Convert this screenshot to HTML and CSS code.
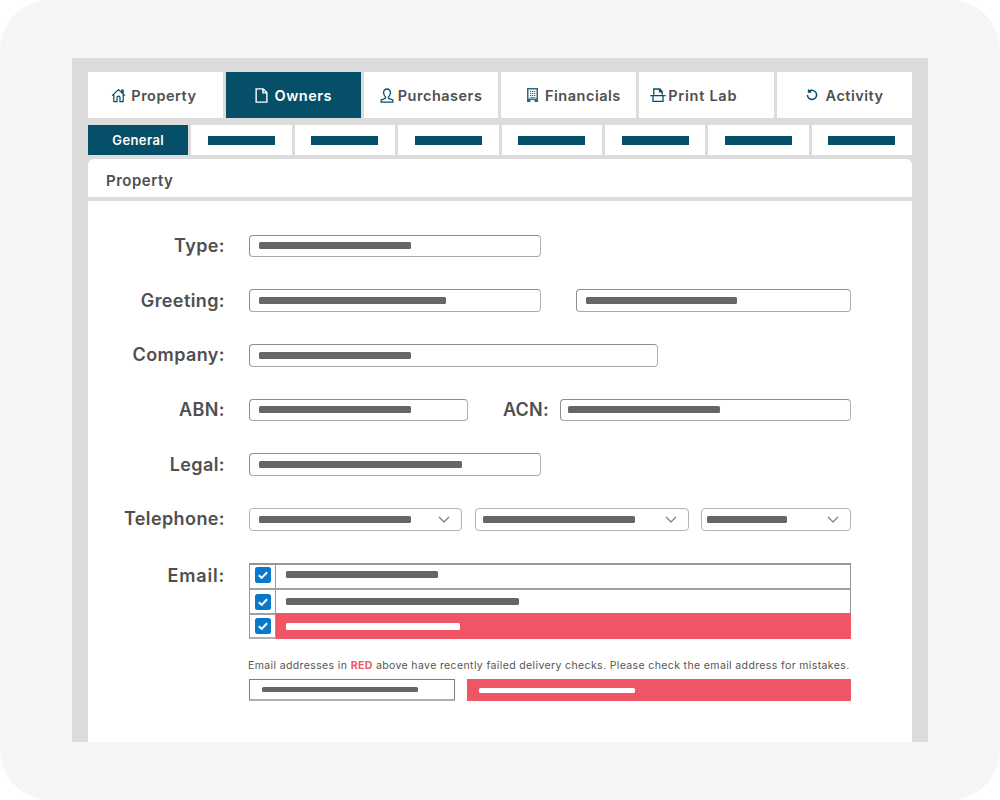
FILE: index.html
```html
<!DOCTYPE html>
<html lang="en">
<head>
<meta charset="utf-8">
<title>Owners</title>
<link rel="stylesheet" href="styles.css">
</head>
<body>
<main class="frame">
  <div class="window">
    <nav class="tabs">
      <a class="tab tab-prop"><svg class="ico ico-home" viewBox="0 0 16 16"><path d="M1.200 8.200 8 1.600l6.800 6.600M11.500 4.700V2.300h1.400V6M3 6.800V14.500h3.400V10.200a1.600 1.600 0 0 1 3.200 0V14.500H13V6.800"/></svg>Property</a>
      <a class="tab active"><svg class="ico ico-doc" viewBox="0 0 12 14"><path d="M1 .8h6.500L11 4.300V13.200H1zM7.300 .8V4.500H11"/></svg>Owners</a>
      <a class="tab"><svg class="ico ico-user" viewBox="0 0 14 15"><path d="M7 1a3.400 3.400 0 0 0-3.400 3.600c0 2 .9 3.500 1.900 4.300v1.500L1.200 12v2.200h11.600V12L8.500 10.400V8.900c1-.8 1.900-2.300 1.900-4.300A3.400 3.400 0 0 0 7 1z"/></svg>Purchasers</a>
      <a class="tab tab-fin"><svg class="ico ico-bld" viewBox="0 0 11 14"><path class="fill" d="M0 0h11v14H0z"/><path class="cut" d="M1.500 1.500h8v9h-8zM3.500 12h4v2h-4z"/><path class="fill" d="M3 3h1.300v1H3zM5 3h1.300v1H5zM7 3h1.300v1H7zM3 5h1.300v1H3zM5 5h1.300v1H5zM7 5h1.300v1H7zM3 7h1.300v1H3zM5 7h1.300v1H5zM7 7h1.300v1H7zM3 9h5.300v.8H3z"/></svg>Financials</a>
      <a class="tab tab-print"><svg class="ico ico-print" viewBox="0 0 16 14"><path d="M3.800 6.800V1h6l2.400 2.600v3.200M9.500 1v2.800h2.700M.3 7.600h15.400M3 8v5.300h10V8"/></svg>Print Lab</a>
      <a class="tab"><svg class="ico ico-undo" viewBox="0 0 12 12"><path d="M3 2.400a4.600 4.600 0 1 1-1.600 3.600M2.600 .4v2.500h2.600"/></svg>Activity</a>
    </nav>
    <nav class="subtabs">
      <a class="subtab active">General</a>
      <a class="subtab"><span class="subbar"></span></a>
      <a class="subtab"><span class="subbar"></span></a>
      <a class="subtab"><span class="subbar"></span></a>
      <a class="subtab"><span class="subbar"></span></a>
      <a class="subtab"><span class="subbar"></span></a>
      <a class="subtab"><span class="subbar"></span></a>
      <a class="subtab"><span class="subbar"></span></a>
    </nav>
    <section class="panel">
      <h2 class="panel-title">Property</h2>
      <form class="form">
        <div class="row">
          <label class="label">Type:</label>
          <div class="field w292"><span class="bar b153"></span></div>
        </div>
        <div class="row">
          <label class="label">Greeting:</label>
          <div class="field w292"><span class="bar b187"></span></div>
          <div class="field w275 ml35"><span class="bar b151"></span></div>
        </div>
        <div class="row">
          <label class="label">Company:</label>
          <div class="field w409"><span class="bar b153"></span></div>
        </div>
        <div class="row">
          <label class="label">ABN:</label>
          <div class="field w219"><span class="bar b153"></span></div>
          <label class="label-inline">ACN:</label>
          <div class="field w291 tight"><span class="bar b153"></span></div>
        </div>
        <div class="row">
          <label class="label">Legal:</label>
          <div class="field w292"><span class="bar b203"></span></div>
        </div>
        <div class="row">
          <label class="label">Telephone:</label>
          <div class="field select w213"><span class="bar b153"></span><svg class="chev" viewBox="0 0 12 7"><path d="M1 1l5 5 5-5"/></svg></div>
          <div class="field select w214 ml13 tight"><span class="bar b153"></span><svg class="chev" viewBox="0 0 12 7"><path d="M1 1l5 5 5-5"/></svg></div>
          <div class="field select w150 ml12 tight2"><span class="bar b81"></span><svg class="chev" viewBox="0 0 12 7"><path d="M1 1l5 5 5-5"/></svg></div>
        </div>
        <div class="row row-email">
          <label class="label">Email:</label>
          <div class="email-col">
            <div class="email-table">
              <div class="email-row"><span class="cell-check"><svg class="check" viewBox="0 0 16 16"><rect width="16" height="16" rx="2.500"/><path d="M3.800 8.300l2.900 2.600 5.400-5.600"/></svg></span><span class="cell-text"><span class="bar b153"></span></span></div>
              <div class="email-row"><span class="cell-check"><svg class="check" viewBox="0 0 16 16"><rect width="16" height="16" rx="2.500"/><path d="M3.800 8.300l2.900 2.600 5.400-5.600"/></svg></span><span class="cell-text"><span class="bar b233"></span></span></div>
              <div class="email-row failed"><span class="cell-check"><svg class="check" viewBox="0 0 16 16"><rect width="16" height="16" rx="2.500"/><path d="M3.800 8.300l2.900 2.600 5.400-5.600"/></svg></span><span class="cell-text"><span class="bar white b174"></span></span></div>
            </div>
            <p class="note">Email addresses in <strong>RED</strong> above have recently failed delivery checks. Please check the email address for mistakes.</p>
            <div class="fix-row">
              <div class="fix-box"><span class="bar thin b156"></span></div>
              <div class="fix-red"><span class="bar thin white b156"></span></div>
            </div>
          </div>
        </div>
      </form>
    </section>
  </div>
</main>
</body>
</html>
```
FILE: styles.css
```css
* { box-sizing: border-box; }
html, body { margin: 0; padding: 0; background: #fff; }
body { font-family: Inter, "Liberation Sans", sans-serif; }

.frame {
  width: 1000px;
  height: 800px;
  padding: 58px 72px;
  background: #f6f6f6;
  border-radius: 50px;
}
.window {
  height: 684px;
  padding: 14px 16px 0;
  background: #dcdcdc;
  display: flex;
  flex-direction: column;
}

.tabs {
  display: grid;
  grid-template-columns: repeat(6, 1fr);
  gap: 3px;
  height: 46px;
}
.tab {
  display: flex;
  align-items: center;
  justify-content: center;
  gap: 5px;
  background: #fff;
  color: #4f4f4f;
  font-size: 14.500px;
  font-weight: 600;
  letter-spacing: .5px;
}
.tab.active { background: #054f68; color: #fff; }
.tab-prop { padding-right: 3px; }
.tab-fin { padding-left: 10px; }
.tab-print { padding-right: 26px; gap: 2px; letter-spacing: .75px; }

.ico { display: block; fill: none; stroke: #054f68; stroke-width: 1.300; flex: none; }
.active .ico { stroke: #fff; }
.ico-home { width: 15px; height: 15px; }
.ico-doc { width: 13px; height: 15px; margin-right: 2px; }
.ico-user { width: 14px; height: 15px; margin-right: -1px; }
.ico-bld { width: 11px; height: 14px; margin-right: 2px; stroke: none; }
.ico-bld .fill { fill: #2b6b81; }
.ico-bld .cut { fill: #fff; }
.ico-print { width: 16px; height: 14px; }
.ico-undo { width: 12px; height: 12px; margin-right: 3px; stroke-width: 1.500; }

.subtabs {
  display: grid;
  grid-template-columns: repeat(8, 1fr);
  gap: 3px;
  height: 30px;
  margin-top: 7px;
}
.subtab {
  display: flex;
  align-items: center;
  justify-content: center;
  background: #fff;
  font-size: 13px;
  font-weight: 600;
  letter-spacing: .4px;
}
.subtab.active { background: #054f68; color: #fff; }
.subbar { width: 67px; height: 9px; background: #054f68; }

.panel {
  flex: 1;
  margin-top: 4px;
  background: #fff;
  border-radius: 6px 6px 0 0;
}
.panel-title {
  margin: 0;
  height: 42px;
  padding: 5px 18px 0;
  display: flex;
  align-items: center;
  border-bottom: 4px solid #dcdcdc;
  color: #4f4f4f;
  font-size: 15px;
  font-weight: 600;
  letter-spacing: .5px;
}

.form {
  display: flex;
  flex-direction: column;
  gap: 32px;
  padding-top: 33.500px;
}
.row { display: flex; align-items: center; height: 22.700px; }
.row-email { align-items: flex-start; height: auto; }
.label {
  width: 137px;
  margin-right: 24px;
  padding-bottom: 1px;
  flex: none;
  text-align: right;
  color: #4f4f4f;
  font-size: 18px;
  font-weight: 600;
  letter-spacing: .4px;
}
.row-email .label { line-height: 26px; padding-bottom: 0; letter-spacing: .8px; }
.label-inline {
  width: 57px;
  margin-left: 35px;
  padding-bottom: 1px;
  flex: none;
  color: #4f4f4f;
  font-size: 18px;
  font-weight: 600;
  letter-spacing: .2px;
}

.field {
  height: 100%;
  flex: none;
  display: flex;
  align-items: center;
  padding: 0 9px;
  background: #fff;
  border: 1px solid #8e8e8e;
  border-bottom-color: #a8a8a8;
  border-right-color: #b0b0b0;
  border-radius: 4px;
}
.field.tight { padding-left: 7px; }
.field.tight2 { padding-left: 5px; }
.select { justify-content: space-between; padding-right: 11px; border-color: #b3b3b3; }
.chev { width: 12px; height: 7px; fill: none; stroke: #777; stroke-width: 1.200; flex: none; }

.w150 { width: 150px; }
.w213 { width: 213px; }
.w214 { width: 214px; }
.w219 { width: 219px; }
.w275 { width: 275px; }
.w291 { width: 291px; }
.w292 { width: 292px; }
.w409 { width: 409px; }
.ml12 { margin-left: 12px; }
.ml13 { margin-left: 13px; }
.ml35 { margin-left: 35px; }

.bar { display: block; height: 7px; background: #666; border-radius: 1.500px; flex: none; }
.bar.white { background: #fff; }
.bar.thin { height: 5px; }
.b81 { width: 80px; }
.b151 { width: 151px; }
.b153 { width: 152px; }
.b156 { width: 156px; }
.b174 { width: 174px; }
.b187 { width: 187px; }
.b203 { width: 203px; }
.b233 { width: 233px; }

.email-col { width: 602px; padding-top: .5px; }
.email-table { border: 1px solid #979797; border-top-width: 2px; border-bottom: 0; }
.email-row { display: flex; height: 25px; border-bottom: 2px solid #a0a0a0; }
.email-row:first-child .cell-text { padding-bottom: 5px; }
.email-row:first-child .cell-check { padding-bottom: 4px; }
.email-row.failed { height: 24px; border-bottom-color: #b0b0b0; }
.cell-check {
  width: 26px;
  flex: none;
  display: flex;
  align-items: center;
  justify-content: center;
  border-right: 1px solid #979797;
}
.cell-text { flex: 1; display: flex; align-items: center; padding-left: 10px; }
.failed .cell-text { background: #ef5565; margin: -2px -1px -2px 0; }
.check { width: 16px; height: 16px; display: block; }
.check rect { fill: #0a78c8; }
.check path { fill: none; stroke: #fff; stroke-width: 2; }

.note {
  margin: 20px 0 0 -1px;
  white-space: nowrap;
  color: #555;
  font-size: 10.500px;
  line-height: 13px;
  letter-spacing: .375px;
}
.note strong { color: #ef5565; font-weight: 700; }

.fix-row { display: flex; gap: 12px; height: 22px; margin-top: 7px; }
.fix-box {
  width: 206px;
  display: flex;
  align-items: center;
  padding-left: 12px;
  border: 1px solid #7e7e7e;
  border-bottom: 2px solid #b0b0b0;
}
.fix-red {
  flex: 1;
  display: flex;
  align-items: center;
  padding-left: 12px;
  background: #ef5565;
}
```
